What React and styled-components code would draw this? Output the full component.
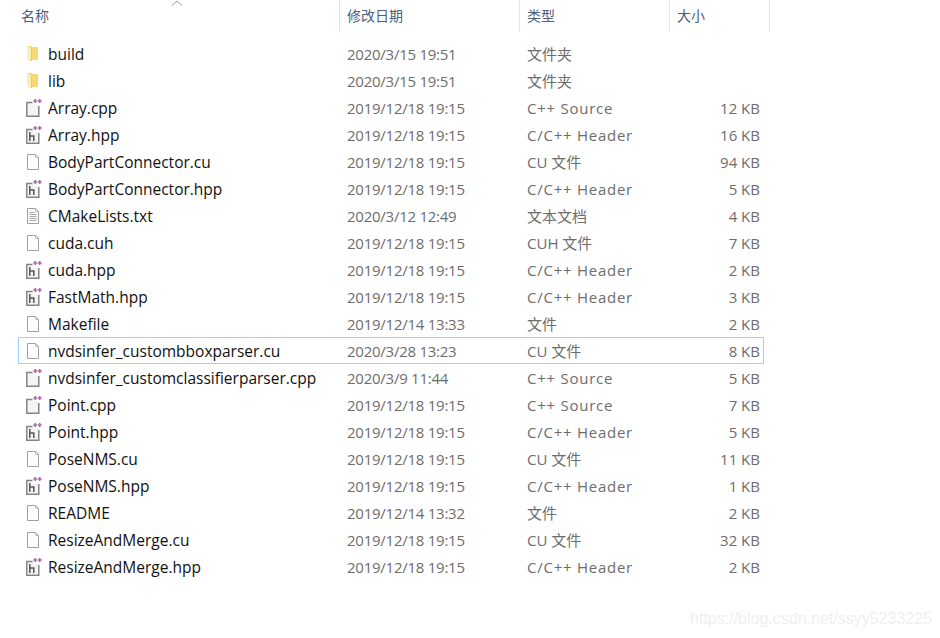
import React from 'react';
import styled, { createGlobalStyle } from 'styled-components';

const GlobalStyle = createGlobalStyle`
  html, body {
    margin: 0;
    background: #fff;
  }
  body {
    font-family: "Open Sans", "Noto Sans CJK SC", sans-serif;
  }
`;

const Page = styled.div`
  position: relative;
  width: 940px;
  height: 638px;
  overflow: hidden;
  background: #fff;
`;

const Header = styled.div`
  display: grid;
  grid-template-columns: 340px 180px 150px 100px;
  height: 32px;
`;

const HeaderCell = styled.div`
  position: relative;
  padding: 6px 0 0 ${(p) => p.$pad}px;
  font-size: 14px;
  line-height: 20px;
  color: #4c607a;
  border-right: 1px solid #e5e5e5;
  box-sizing: border-box;
`;

const SortArrow = styled.svg`
  position: absolute;
  left: 171px;
  top: 0;
`;

const List = styled.div`
  padding: 8px 0 0 18px;
`;

const Row = styled.div`
  display: grid;
  grid-template-columns: 328px 180px 150px 83px;
  align-items: center;
  width: 746px;
  height: 27px;
  box-sizing: border-box;
  border: 1px solid ${(p) => (p.$selected ? '#99d1ff' : 'transparent')};
  font-size: 15px;
`;

const NameCell = styled.div`
  display: flex;
  align-items: center;
  gap: 6px;
  padding-left: 6px;
  color: #111;
  font-size: 15.5px;
  white-space: nowrap;
`;

const MetaCell = styled.div`
  color: #6d6d6d;
  white-space: nowrap;
`;

const DateCell = styled(MetaCell)`
  letter-spacing: -0.25px;
`;

const TypeCell = styled(MetaCell)`
  letter-spacing: ${(p) => (p.$latin ? '0.75px' : '0')};
`;

const SizeCell = styled(MetaCell)`
  text-align: right;
`;

const Watermark = styled.div`
  position: absolute;
  right: 8px;
  top: 610px;
  font-family: "Liberation Sans", sans-serif;
  font-size: 16px;
  color: #efefef;
`;

function FolderIcon() {
  return (
    <svg width="17" height="18" viewBox="0 0 17 18">
      <path d="M2 1h4l1 1h6v13H4z" fill="#f9d876" />
      <path d="M2 1l4 2v14l-3-2-1-1z" fill="#fdeeb3" />
      <path d="M6 3h1v13H6z" fill="#f2c55c" />
    </svg>
  );
}

function PageIcon({ lines }) {
  return (
    <svg width="17" height="18" viewBox="0 0 17 18" fill="none">
      <path d="M2.500 1.500h8l3 3v12h-11z" fill="#fcfcfc" stroke="#a0a0a0" />
      <path d="M10.500 1.500v3h3" stroke="#c0c0c0" />
      {lines && (
        <path d="M4.500 5.500h5M4.500 7.500h7M4.500 9.500h7M4.500 11.500h7M4.500 13.500h7" stroke="#a8a8a8" />
      )}
    </svg>
  );
}

function CodeIcon({ letter }) {
  return (
    <svg width="17" height="18" viewBox="0 0 17 18" fill="none">
      <path d="M7.500 3.500H1.800v13.700h12V7" fill="#f4f4f4" stroke="#858585" strokeWidth="1.500" />
      <path d="M8 1h6v5H8z" fill="#fff" />
      {letter && <path d="M4.800 6v9M4.800 10h4v5" stroke="#555" strokeWidth="1.500" />}
      <path d="M9.500 0h1.500v1.200h1.200v1.500H11v1.200H9.500V2.700H8.300V1.200h1.200zM14 0h1.500v1.200h1.200v1.500h-1.200v1.200H14V2.700h-1.200V1.200H14z" fill="#b565ae" />
    </svg>
  );
}

const icons = {
  folder: <FolderIcon />,
  page: <PageIcon />,
  text: <PageIcon lines />,
  cpp: <CodeIcon />,
  hpp: <CodeIcon letter />,
};

const files = [
  ['build', 'folder', '2020/3/15 19:51', '文件夹', ''],
  ['lib', 'folder', '2020/3/15 19:51', '文件夹', ''],
  ['Array.cpp', 'cpp', '2019/12/18 19:15', 'C++ Source', '12 KB'],
  ['Array.hpp', 'hpp', '2019/12/18 19:15', 'C/C++ Header', '16 KB'],
  ['BodyPartConnector.cu', 'page', '2019/12/18 19:15', 'CU 文件', '94 KB'],
  ['BodyPartConnector.hpp', 'hpp', '2019/12/18 19:15', 'C/C++ Header', '5 KB'],
  ['CMakeLists.txt', 'text', '2020/3/12 12:49', '文本文档', '4 KB'],
  ['cuda.cuh', 'page', '2019/12/18 19:15', 'CUH 文件', '7 KB'],
  ['cuda.hpp', 'hpp', '2019/12/18 19:15', 'C/C++ Header', '2 KB'],
  ['FastMath.hpp', 'hpp', '2019/12/18 19:15', 'C/C++ Header', '3 KB'],
  ['Makefile', 'page', '2019/12/14 13:33', '文件', '2 KB'],
  ['nvdsinfer_custombboxparser.cu', 'page', '2020/3/28 13:23', 'CU 文件', '8 KB', true],
  ['nvdsinfer_customclassifierparser.cpp', 'cpp', '2020/3/9 11:44', 'C++ Source', '5 KB'],
  ['Point.cpp', 'cpp', '2019/12/18 19:15', 'C++ Source', '7 KB'],
  ['Point.hpp', 'hpp', '2019/12/18 19:15', 'C/C++ Header', '5 KB'],
  ['PoseNMS.cu', 'page', '2019/12/18 19:15', 'CU 文件', '11 KB'],
  ['PoseNMS.hpp', 'hpp', '2019/12/18 19:15', 'C/C++ Header', '1 KB'],
  ['README', 'page', '2019/12/14 13:32', '文件', '2 KB'],
  ['ResizeAndMerge.cu', 'page', '2019/12/18 19:15', 'CU 文件', '32 KB'],
  ['ResizeAndMerge.hpp', 'hpp', '2019/12/18 19:15', 'C/C++ Header', '2 KB'],
];

export default function App() {
  return (
    <Page>
      <GlobalStyle />
      <Header>
        <HeaderCell $pad={21}>
          名称
          <SortArrow width="12" height="6" viewBox="0 0 12 6" fill="none">
            <path d="M1 5.500l5-4.500 5 4.500" stroke="#9a9a9a" />
          </SortArrow>
        </HeaderCell>
        <HeaderCell $pad={7}>修改日期</HeaderCell>
        <HeaderCell $pad={7}>类型</HeaderCell>
        <HeaderCell $pad={7}>大小</HeaderCell>
      </Header>
      <List>
        {files.map(([name, icon, date, type, size, selected]) => (
          <Row key={name} $selected={selected}>
            <NameCell>
              {icons[icon]}
              {name}
            </NameCell>
            <DateCell>{date}</DateCell>
            <TypeCell $latin={type.includes('+')}>{type}</TypeCell>
            <SizeCell>{size}</SizeCell>
          </Row>
        ))}
      </List>
      <Watermark>https://blog.csdn.net/ssyy5233225</Watermark>
    </Page>
  );
}
